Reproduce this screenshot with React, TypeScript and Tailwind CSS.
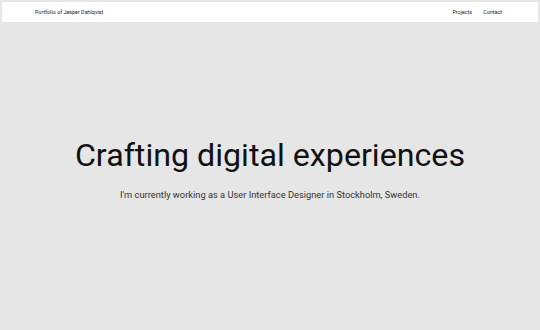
import React from "react";

export default function App() {
  return (
    <div
      className="w-[540px] h-[330px] bg-[#e6e6e6] p-[2px] flex flex-col overflow-hidden"
      style={{ fontFamily: "Roboto, 'Liberation Sans', sans-serif" }}
    >
      <header className="h-[20px] bg-white flex items-center justify-between pl-[33px] pr-[36px] shrink-0">
        <span className="text-[5.4px] text-[#222]">Portfolio of Jesper Dahlqvist</span>
        <nav className="flex gap-[11px] text-[5.4px] text-[#222]">
          <span>Projects</span>
          <span>Contact</span>
        </nav>
      </header>
      <main className="flex-1 flex flex-col items-center pt-[113px]">
        <h1 className="text-[32.2px] leading-[40px] text-[#111] font-normal">Crafting digital experiences</h1>
        <p className="mt-[14px] text-[9.3px] leading-[12px] text-[#333]">
          I'm currently working as a User Interface Designer in Stockholm, Sweden.
        </p>
      </main>
    </div>
  );
}
